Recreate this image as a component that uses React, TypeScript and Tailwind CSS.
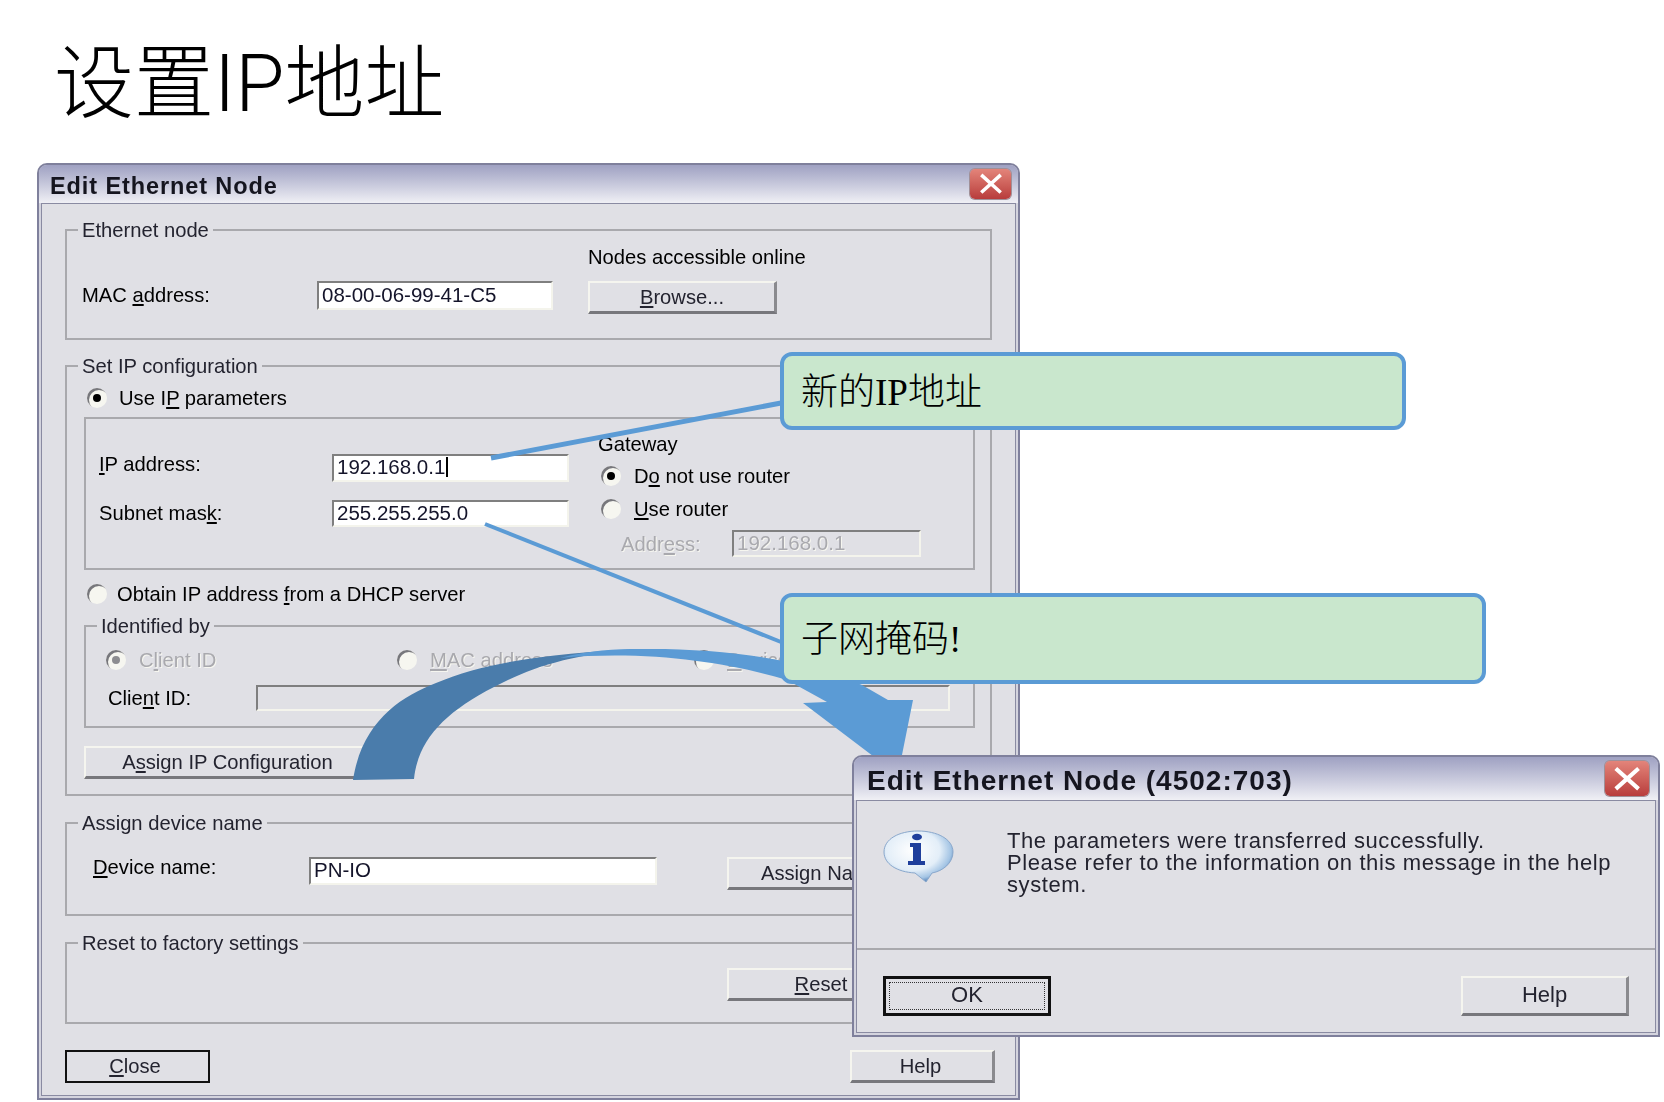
import React from "react";

const Group = ({ title, cls, children }: { title: string; cls: string; children: React.ReactNode }) => (
  <fieldset className={`border-2 border-[#a9a9ad] min-w-0 ${cls}`}>
    <legend className="ml-[11px] px-[4px] h-[24px] leading-[24px] text-[#23232f]">{title}</legend>
    {children}
  </fieldset>
);

const Radio = ({ on, off, cls }: { on?: boolean; off?: boolean; cls?: string }) => (
  <span className={`flex shrink-0 items-center justify-center w-[20px] h-[20px] rounded-full bg-[#f6f6f0] shadow-[inset_2px_2px_0_#77777c] ${cls ?? ""}`}>
    {on && <span className={`block w-[8px] h-[8px] rounded-full ${off ? "bg-[#8c8c90]" : "bg-black"}`} />}
  </span>
);

const Input = ({ cls, children, off }: { cls: string; children?: React.ReactNode; off?: boolean }) => (
  <div className={`flex items-center shrink-0 pl-[3px] pb-[2px] border-2 border-t-[#7f7f7f] border-l-[#7f7f7f] border-r-[#f4f4ec] border-b-[#f4f4ec] text-[20.5px] ${off ? "bg-[#e0e0e5] text-[#a9a9ae] [text-shadow:1px_1px_0_#f6f6f0]" : "bg-white text-[#14142a]"} ${cls}`}>
    {children}
  </div>
);

const Btn = ({ cls, children }: { cls: string; children: React.ReactNode }) => (
  <div className={`flex items-center justify-center shrink-0 border-2 border-b-[3px] border-r-[3px] border-t-[#f5f5ef] border-l-[#f5f5ef] border-r-[#8a8a8e] border-b-[#77777c] text-[#23232f] ${cls}`}>
    {children}
  </div>
);

const CloseBox = ({ cls }: { cls: string }) => (
  <div className={`flex items-center justify-center rounded-[5px] bg-linear-to-b from-[#e3847a] to-[#b83c3c] shadow-[0_0_0_1px_#a09098] ${cls}`}>
    <svg viewBox="0 0 24 24" className="w-[78%] h-[78%]" fill="none" stroke="#fff" strokeWidth="3.6">
      <path d="M2 3 L22 21 M22 3 L2 21" />
    </svg>
  </div>
);

const InfoIcon = () => (
  <svg width="72" height="54" viewBox="0 0 72 54" className="shrink-0">
    <defs>
      <radialGradient id="bub" cx="42%" cy="38%" r="65%">
        <stop offset="0%" stopColor="#ffffff" />
        <stop offset="60%" stopColor="#e3eef8" />
        <stop offset="85%" stopColor="#a3c4e4" />
        <stop offset="100%" stopColor="#4c7cb4" />
      </radialGradient>
    </defs>
    <path d="M35 1 C54 1 70 9 70 22 C70 33 60 41 49 43 L43 52 L32 43 C14 42 1 34 1 22 C1 9 16 1 35 1 Z" fill="url(#bub)" stroke="#8aa8cc" strokeWidth="1" />
    <ellipse cx="34" cy="7" rx="5" ry="3.2" fill="#1f3f9c" />
    <path d="M27 13 H38 V31 H42 V35 H25 V31 H30 V17 H27 Z" fill="#1f3f9c" />
  </svg>
);

export default function App() {
  return (
    <div className="relative w-[1664px] h-[1102px] overflow-hidden bg-white font-['Liberation_Sans','Noto_Sans_CJK_SC',sans-serif] text-[20.2px] leading-[24px]">
      <h1 className="pl-[54px] pt-[32px] font-['Roboto','Noto_Sans_CJK_SC',sans-serif] font-light text-[80px] leading-[104px] text-black">设置IP地址</h1>

      {/* Main window */}
      <div className="absolute left-[37px] top-[163px] w-[983px] h-[937px] flex flex-col rounded-t-[10px] border-2 border-[#7f809c] bg-[#d4d4de] blur-[0.5px]">
        <div className="flex items-center justify-between h-[38px] shrink-0 pl-[11px] pr-[7px] rounded-t-[8px] bg-linear-to-b from-[#9fa1c2] to-[#f0f0f5]">
          <span className="mt-[3px] font-bold text-[23.5px] tracking-[0.9px] text-[#15151f]">Edit Ethernet Node</span>
          <CloseBox cls="w-[41px] h-[30px]" />
        </div>
        <div className="flex-1 mx-[2px] mb-[2px] flex flex-col pl-[23px] pt-[14px] border border-[#8a8ba2] bg-[#e0e0e5]">
          <Group title="Ethernet node" cls="w-[927px] h-[122px]">
            <div className="mt-[3px] h-[24px] pl-[521px]">Nodes accessible online</div>
            <div className="mt-[12px] flex items-start pl-[15px]">
              <span className="w-[235px] h-[29px] leading-[29px]">MAC <u>a</u>ddress:</span>
              <Input cls="w-[236px] h-[29px]">08-00-06-99-41-C5</Input>
              <Btn cls="ml-[35px] w-[189px] h-[33px]"><span><u>B</u>rowse...</span></Btn>
            </div>
          </Group>

          <Group title="Set IP configuration" cls="mt-[14px] w-[927px] h-[442px]">
            <div className="mt-[8px] h-[24px] pl-[20px] flex items-center gap-[12px]">
              <Radio on />
              <span>Use I<u>P</u> parameters</span>
            </div>
            <div className="mt-[7px] ml-[17px] w-[891px] h-[153px] flex border-2 border-[#a9a9ad]">
              <div className="w-[512px] shrink-0 pl-[13px] pt-[35px]">
                <div className="flex items-center h-[28px]">
                  <span className="w-[233px] -mt-[9px]"><u>I</u>P address:</span>
                  <Input cls="w-[237px] h-[28px]">192.168.0.1<span className="ml-[1px] w-[2px] h-[20px] bg-black" /></Input>
                </div>
                <div className="mt-[18px] flex items-center h-[27px]">
                  <span className="w-[233px] -mt-[1px]">Subnet mas<u>k</u>:</span>
                  <Input cls="w-[237px] h-[27px]">255.255.255.0</Input>
                </div>
              </div>
              <div className="flex-1 pt-[13px] pl-[0px]">
                <div className="h-[24px]">Gateway</div>
                <div className="mt-[8px] h-[24px] flex items-center gap-[13px] pl-[3px]">
                  <Radio on />
                  <span>D<u>o</u> not use router</span>
                </div>
                <div className="mt-[9px] h-[24px] flex items-center gap-[13px] pl-[3px]">
                  <Radio />
                  <span><u>U</u>se router</span>
                </div>
                <div className="mt-[9px] h-[27px] flex items-center pl-[23px]">
                  <span className="w-[111px] text-[#a9a9ae] [text-shadow:1px_1px_0_#f6f6f0]">Addr<u>e</u>ss:</span>
                  <Input off cls="w-[189px] h-[27px]">192.168.0.1</Input>
                </div>
              </div>
            </div>
            <div className="mt-[12px] h-[24px] pl-[20px] flex items-center gap-[10px]">
              <Radio />
              <span>Obtain IP address <u>f</u>rom a DHCP server</span>
            </div>
            <Group title="Identified by" cls="mt-[8px] ml-[17px] w-[891px] h-[114px]">
              <div className="mt-[10px] h-[24px] flex items-center pl-[20px] text-[#a9a9ae] [text-shadow:1px_1px_0_#f6f6f0]">
                <div className="w-[291px] flex items-center gap-[13px]"><Radio on off /><span>C<u>l</u>ient ID</span></div>
                <div className="w-[297px] flex items-center gap-[13px]"><Radio /><span><u>M</u>AC address</span></div>
                <div className="flex items-center gap-[13px]"><Radio /><span className="whitespace-nowrap"><u>D</u>evice name</span></div>
              </div>
              <div className="mt-[13px] flex items-center pl-[22px]">
                <span className="w-[148px]">Clie<u>n</u>t ID:</span>
                <Input off cls="w-[694px] h-[26px]" />
              </div>
            </Group>
            <Btn cls="mt-[18px] ml-[17px] w-[288px] h-[33px]"><span>A<u>s</u>sign IP Configuration</span></Btn>
          </Group>

          <Group title="Assign device name" cls="mt-[15px] w-[927px] h-[105px]">
            <div className="mt-[22px] flex items-start pl-[26px]">
              <span className="w-[216px] h-[24px] -mt-[2px]"><u>D</u>evice name:</span>
              <Input cls="w-[348px] h-[28px]">PN-IO</Input>
              <Btn cls="ml-[70px] w-[189px] h-[33px]"><span>Assign Name</span></Btn>
            </div>
          </Group>

          <Group title="Reset to factory settings" cls="mt-[15px] w-[927px] h-[93px]">
            <Btn cls="mt-[13px] ml-[660px] w-[189px] h-[33px]"><span><u>R</u>eset</span></Btn>
          </Group>

          <div className="mt-[26px] w-[930px] flex justify-between">
            <div className="border-2 border-[#111] w-[145px] h-[33px] flex items-center justify-center text-[#23232f] pr-[5px] pb-[2px]"><span><u>C</u>lose</span></div>
            <Btn cls="w-[145px] h-[33px] pr-[3px]">Help</Btn>
          </div>
        </div>
      </div>

      {/* Annotation arrows */}
      <svg className="absolute left-0 top-0" width="1664" height="1102" viewBox="0 0 1664 1102" fill="none">
        <path d="M491 458 L781 403" stroke="#5b9bd5" strokeWidth="5" />
        <path d="M485 524 L781 642" stroke="#5b9bd5" strokeWidth="4" />
        <path d="M353 780 C362 722 400 697 436 683 C490 660 560 653 640 649 C570 654 530 668 494 687 C445 712 418 740 414 779 Z" fill="#4a7cab" />
        <path d="M560 658 C590 650 615 649 640 649 C720 648 800 658 862 685 L888 700 L913 700 L898 775 L803 703 L827 702 L787 680 C730 663 650 650 560 658 Z" fill="#5b9bd5" />
      </svg>

      {/* Callouts */}
      <div className="absolute left-[780px] top-[352px] w-[626px] h-[78px] flex items-center pl-[17px] pt-[3px] rounded-[12px] border-[4px] border-[#5b9bd5] bg-[#c9e7cd] font-['Liberation_Serif','Noto_Sans_CJK_SC',serif] font-light text-[37px] text-black">新的IP地址</div>
      <div className="absolute left-[780px] top-[593px] w-[706px] h-[91px] flex items-center pl-[17px] pt-[3px] rounded-[12px] border-[4px] border-[#5b9bd5] bg-[#c9e7cd] font-['Liberation_Serif','Noto_Sans_CJK_SC',serif] font-light text-[37px] text-black">子网掩码!</div>

      {/* Message dialog */}
      <div className="absolute left-[852px] top-[755px] w-[808px] h-[282px] flex flex-col rounded-t-[10px] border-2 border-[#7f809c] bg-[#d4d4de] blur-[0.5px]">
        <div className="flex items-center justify-between h-[43px] shrink-0 pl-[13px] pr-[9px] rounded-t-[8px] bg-linear-to-b from-[#9fa1c2] to-[#f0f0f5]">
          <span className="mt-[4px] font-bold text-[28px] tracking-[1px] text-[#15151f]">Edit Ethernet Node (4502:703)</span>
          <CloseBox cls="w-[44px] h-[35px]" />
        </div>
        <div className="flex-1 mx-[2px] mb-[2px] flex flex-col border border-[#8a8ba2] bg-[#e0e0e5]">
          <div className="h-[149px] shrink-0 flex items-start pl-[26px] pt-[29px] border-b-2 border-[#a9a9ad]">
            <InfoIcon />
            <p className="ml-[52px] text-[22px] tracking-[0.6px] leading-[22px] text-[#23232f] whitespace-nowrap">
              The parameters were transferred successfully.<br />
              Please refer to the information on this message in the help<br />
              system.
            </p>
          </div>
          <div className="flex-1 flex justify-between pl-[26px] pr-[26px] pt-[26px]">
            <div className="flex items-center justify-center w-[168px] h-[40px] border-[3px] border-[#111] p-[3px] text-[22px] text-[#23232f]">
              <div className="flex-1 h-full flex items-center justify-center border border-dotted border-[#333] pb-[2px]">OK</div>
            </div>
            <Btn cls="w-[168px] h-[40px] text-[22px] pb-[1px]">Help</Btn>
          </div>
        </div>
      </div>
    </div>
  );
}
